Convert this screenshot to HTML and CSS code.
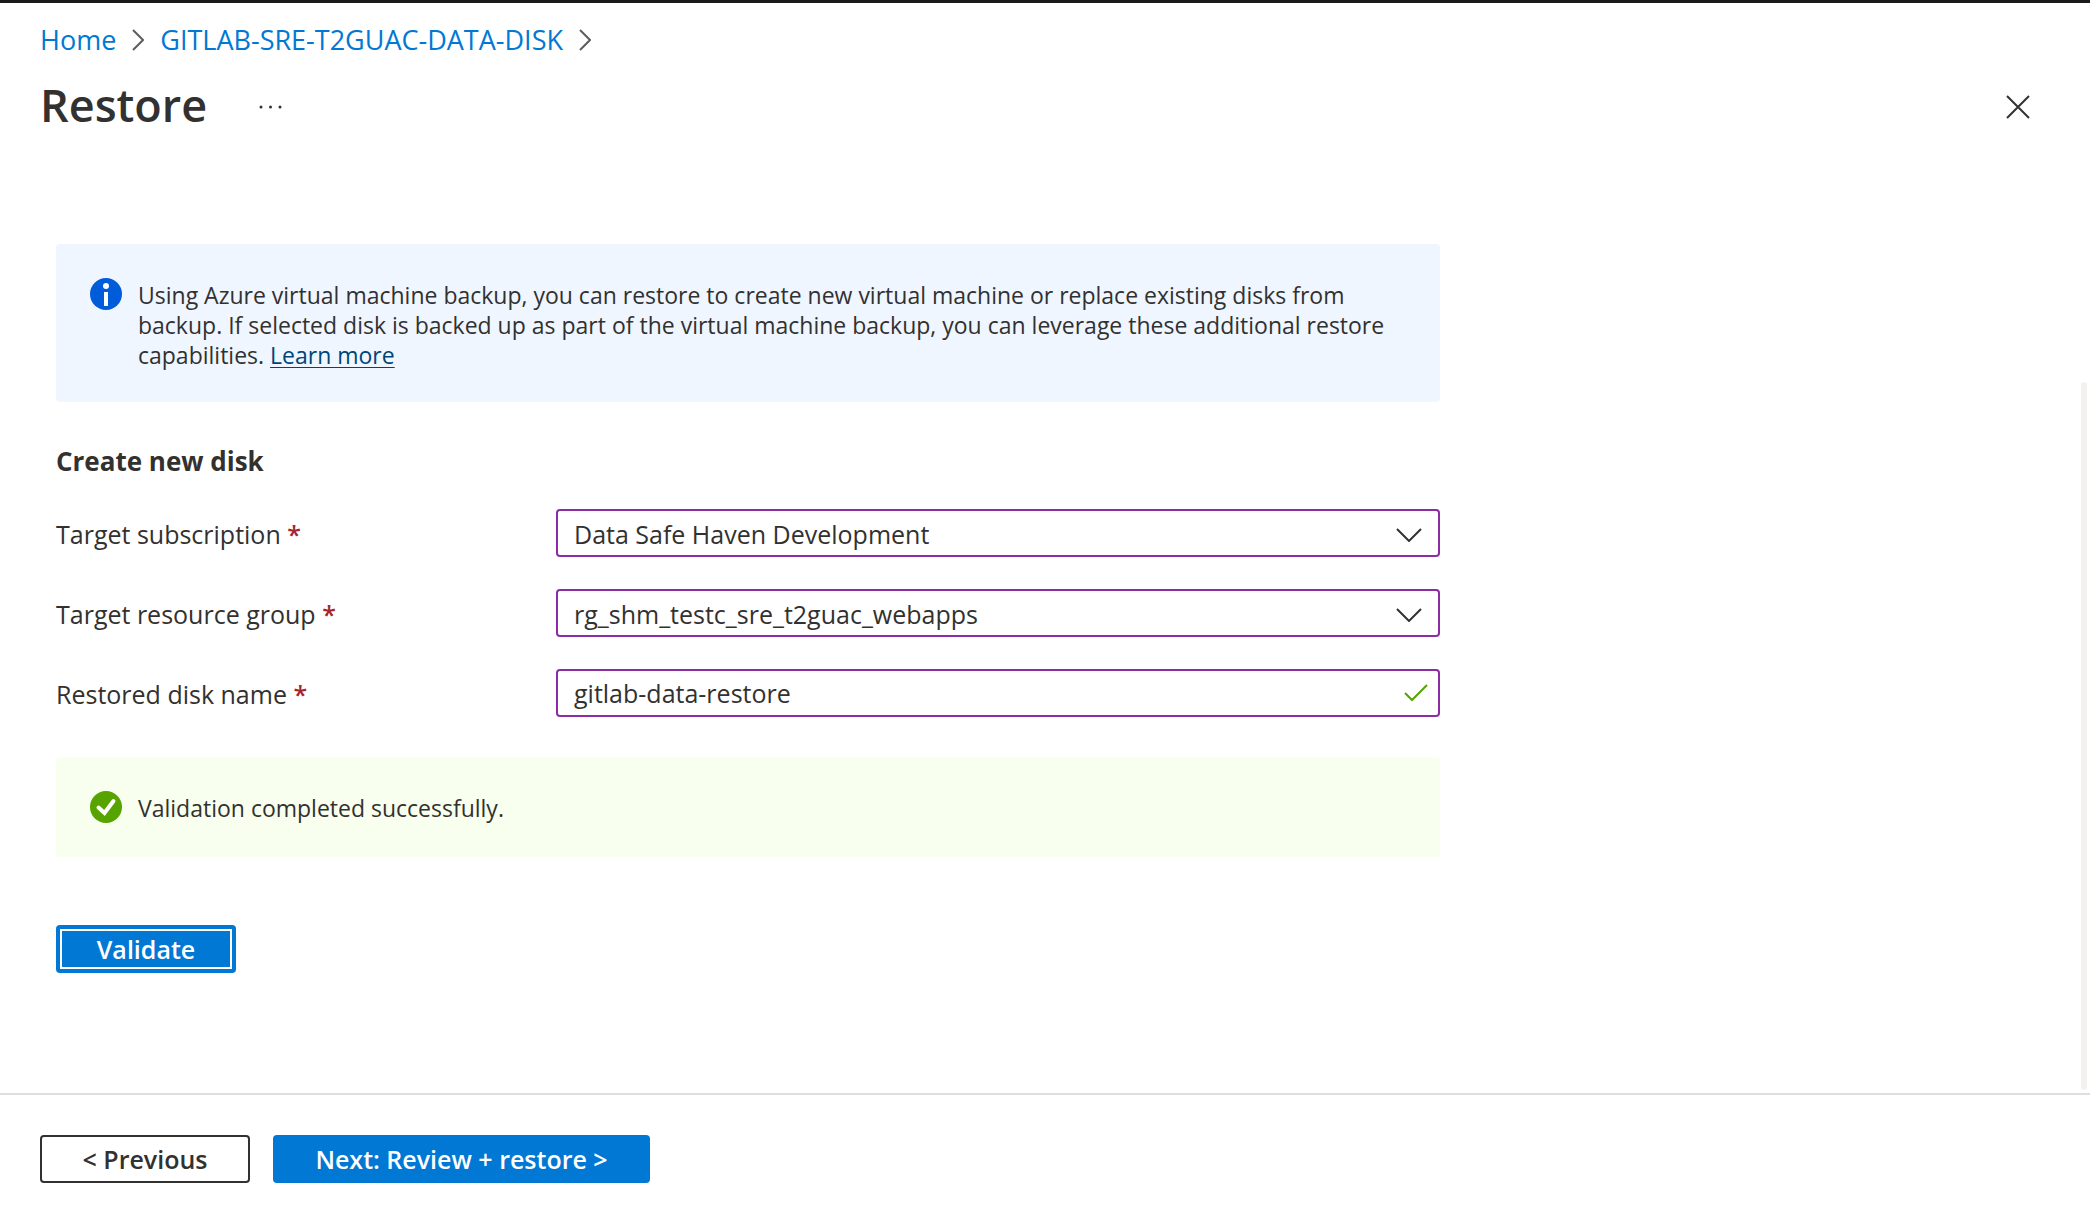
FILE: index.html
```html
<!DOCTYPE html>
<html lang="en">
<head>
  <meta charset="utf-8">
  <meta name="viewport" content="width=device-width, initial-scale=1">
  <title>Restore</title>
  <link rel="stylesheet" href="styles.css">
</head>
<body>
  <header class="header">
    <nav class="breadcrumb" aria-label="Breadcrumb">
      <a class="crumb" href="#">Home</a>
      <svg class="crumb-sep" viewBox="0 0 12 22" aria-hidden="true"><path d="M1 1l10 10L1 21"/></svg>
      <a class="crumb" href="#">GITLAB-SRE-T2GUAC-DATA-DISK</a>
      <svg class="crumb-sep" viewBox="0 0 12 22" aria-hidden="true"><path d="M1 1l10 10L1 21"/></svg>
    </nav>
    <div class="title-row">
      <h1 class="title">Restore</h1>
      <button class="icon-button" type="button" aria-label="More actions">
        <svg class="more-icon" viewBox="0 0 24 4" aria-hidden="true"><circle cx="2" cy="2" r="1.5"/><circle cx="11.500" cy="2" r="1.5"/><circle cx="21" cy="2" r="1.5"/></svg>
      </button>
      <button class="icon-button close" type="button" aria-label="Close">
        <svg class="close-icon" viewBox="0 0 24 24" aria-hidden="true"><path d="M1 1l22 22M23 1L1 23"/></svg>
      </button>
    </div>
  </header>

  <main class="content">
    <form class="form" id="restore-form">
      <div class="message info">
        <svg class="message-icon" viewBox="0 0 32 32" aria-hidden="true">
          <circle class="info-disc" cx="16" cy="16" r="16"/>
          <circle class="glyph" cx="16" cy="8" r="3"/>
          <path class="glyph" d="M14 14h4v14h-4z"/>
        </svg>
        <p class="message-text">Using Azure virtual machine backup, you can restore to create new virtual machine or replace existing disks from backup. If selected disk is backed up as part of the virtual machine backup, you can leverage these additional restore capabilities. <a class="learn-more" href="#">Learn more</a></p>
      </div>

      <h2 class="section-title">Create new disk</h2>

      <div class="fields">
        <div class="field">
          <label class="label" for="subscription">Target subscription <span class="required">*</span></label>
          <div class="control">
            <select class="input select" id="subscription"><option>Data Safe Haven Development</option></select>
            <svg class="chevron" viewBox="0 0 26 14" aria-hidden="true"><path d="M1 1l12 12L25 1"/></svg>
          </div>
        </div>
        <div class="field">
          <label class="label" for="group">Target resource group <span class="required">*</span></label>
          <div class="control">
            <select class="input select" id="group"><option>rg_shm_testc_sre_t2guac_webapps</option></select>
            <svg class="chevron" viewBox="0 0 26 14" aria-hidden="true"><path d="M1 1l12 12L25 1"/></svg>
          </div>
        </div>
        <div class="field">
          <label class="label" for="disk">Restored disk name <span class="required">*</span></label>
          <div class="control">
            <input class="input" id="disk" type="text" value="gitlab-data-restore">
            <svg class="tick" viewBox="0 0 24 18" aria-hidden="true"><path d="M1 9l7 7L23 1"/></svg>
          </div>
        </div>
      </div>

      <div class="message success" role="status">
        <svg class="message-icon" viewBox="0 0 32 32" aria-hidden="true">
          <circle class="success-disc" cx="16" cy="16" r="16"/>
          <path class="success-tick" d="M8.500 16.500l6 5.500L23.500 10"/>
        </svg>
        <p class="message-text">Validation completed successfully.</p>
      </div>

      <button class="button primary validate" type="button">Validate</button>
    </form>
    <div class="scroll-thumb"></div>
  </main>

  <footer class="footer">
    <button class="button secondary" type="button">&lt; Previous</button>
    <button class="button primary next" type="submit" form="restore-form">Next: Review + restore &gt;</button>
  </footer>
</body>
</html>
```
FILE: styles.css
```css
* {
  box-sizing: border-box;
}

body {
  display: flex;
  flex-direction: column;
  min-height: 100vh;
  margin: 0;
  border-top: 3px solid #1b1a19;
  background: #fff;
  color: #323130;
  font-family: "Open Sans", "Noto Sans", sans-serif;
  font-size: 25px;
  line-height: 32px;
}

h1, h2, p {
  margin: 0;
}

button, input, select {
  margin: 0;
  color: inherit;
  font: inherit;
}

svg {
  display: block;
  flex: none;
  fill: none;
}

.header {
  padding: 19px 56px 0 40px;
}

.breadcrumb {
  display: flex;
  align-items: center;
  gap: 16px;
  min-height: 36px;
}

.crumb {
  color: #0078d4;
  font-size: 27px;
  text-decoration: none;
}

.crumb-sep {
  width: 12px;
  height: 22px;
  stroke: #605e5c;
  stroke-width: 2;
}

.title-row {
  display: flex;
  align-items: center;
  gap: 48px;
  margin-top: 15px;
}

.title {
  padding-bottom: 4px;
  font-size: 45px;
  font-weight: 600;
  line-height: 64px;
}

.icon-button {
  display: flex;
  padding: 4px;
  border: 0;
  background: none;
}

.close {
  margin-left: auto;
}

.more-icon {
  width: 24px;
  height: 4px;
  fill: #323130;
}

.close-icon {
  width: 24px;
  height: 24px;
  stroke: #323130;
  stroke-width: 2;
}

.content {
  position: relative;
  flex: 1;
  padding: 103px 56px 104px;
}

.form {
  max-width: 1384px;
}

.message {
  display: flex;
  gap: 16px;
  padding: 34px;
  border-radius: 4px;
}

.message-icon {
  width: 32px;
  height: 32px;
}

.message-text {
  padding-top: 2px;
  font-size: 23px;
  line-height: 30px;
}

.info {
  padding-bottom: 32px;
  background: #eff6ff;
}

.info-disc {
  fill: #015cda;
}

.glyph {
  fill: #fff;
}

.learn-more {
  display: inline-block;
  color: #004578;
  text-decoration-thickness: 1px;
  text-underline-offset: 3px;
}

.section-title {
  margin-top: 43px;
  font-size: 26px;
  font-weight: 700;
}

.fields {
  display: grid;
  gap: 32px;
  margin-top: 32px;
}

.field {
  display: grid;
  grid-template-columns: 500px 1fr;
  align-items: center;
}

.label {
  padding-top: 2px;
}

.required {
  color: #a4262c;
  font-weight: 600;
}

.control {
  position: relative;
}

.input {
  display: block;
  width: 100%;
  height: 48px;
  padding: 0 56px 0 16px;
  border: 2px solid #8a2da5;
  border-radius: 4px;
  outline: 0;
  background: #fff;
}

.select {
  padding-top: 2px;
  appearance: none;
}

.chevron {
  position: absolute;
  top: 19px;
  right: 18px;
  width: 26px;
  height: 14px;
  stroke: #323130;
  stroke-width: 2;
  pointer-events: none;
}

.tick {
  position: absolute;
  top: 15px;
  right: 12px;
  width: 24px;
  height: 18px;
  stroke: #57a300;
  stroke-width: 2;
}

.success {
  margin-top: 40px;
  background: #f8ffee;
}

.success-disc {
  fill: #57a300;
}

.success-tick {
  stroke: #fff;
  stroke-width: 4;
  stroke-linecap: round;
}

.button {
  height: 48px;
  padding: 0;
  border: 0;
  border-radius: 4px;
  font-weight: 600;
  font-size: 25px;
}

.primary {
  background: #0078d4;
  color: #fff;
}

.secondary {
  width: 210px;
  border: 2px solid #323130;
  background: #fff;
}

.validate {
  width: 180px;
  margin-top: 68px;
  outline: 2px solid #fff;
  outline-offset: -6px;
}

.next {
  width: 377px;
}

.scroll-thumb {
  position: absolute;
  top: 241px;
  right: 3px;
  bottom: 3px;
  width: 6px;
  border-radius: 3px;
  background: #f3f2f1;
}

.footer {
  display: flex;
  gap: 23px;
  padding: 40px 40px 39px;
  border-top: 2px solid #e1dfdd;
}
```
